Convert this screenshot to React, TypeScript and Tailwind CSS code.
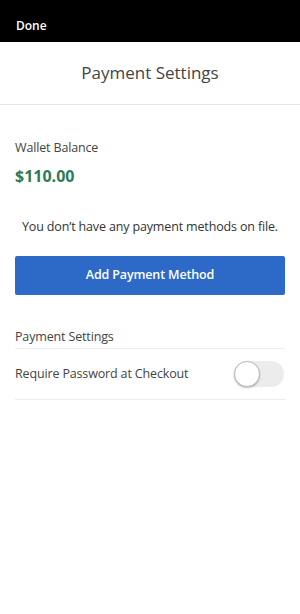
export default function App() {
  return (
    <div className="w-[300px] h-[614px] bg-white flex flex-col" style={{ fontFamily: '"Open Sans", "Noto Sans", sans-serif' }}>
      {/* Top bar */}
      <div className="h-[42px] bg-black flex items-center px-4 pt-[10px]">
        <span className="text-white text-[12px] font-semibold">Done</span>
      </div>

      {/* Title */}
      <div className="h-[63px] flex items-center justify-center border-b border-[#e6e6e6]">
        <h1 className="text-[17px] text-[#444]">Payment Settings</h1>
      </div>

      <div className="px-[15px] flex flex-col text-[12.5px] tracking-[-0.15px]">
        <div className="mt-[34px] text-[#444]">Wallet Balance</div>
        <div className="mt-[6px] text-[16px] tracking-normal font-bold text-[#2f7a59]">$110.00</div>

        <div className="mt-[30px] text-[#333] text-center whitespace-nowrap">
          You don’t have any payment methods on file.
        </div>

        <button className="mt-[19px] h-[39px] w-full bg-[#2d6ac8] rounded-[2px] text-white font-semibold">
          Add Payment Method
        </button>

        <div className="mt-[33px] pb-[2px] text-[#444] border-b border-[#ececec]">Payment Settings</div>

        <div className="h-[51px] flex items-center justify-between border-b border-[#ececec]">
          <span className="text-[#444]">Require Password at Checkout</span>
          <div className="relative w-[50px] h-[26px] mr-[1px] rounded-full bg-[#ececec]">
            <div className="absolute left-0 top-0 w-[26px] h-[26px] rounded-full bg-white border border-[#bbb] shadow-[0_1px_2px_rgba(0,0,0,0.25)]" />
          </div>
        </div>
      </div>
    </div>
  );
}
